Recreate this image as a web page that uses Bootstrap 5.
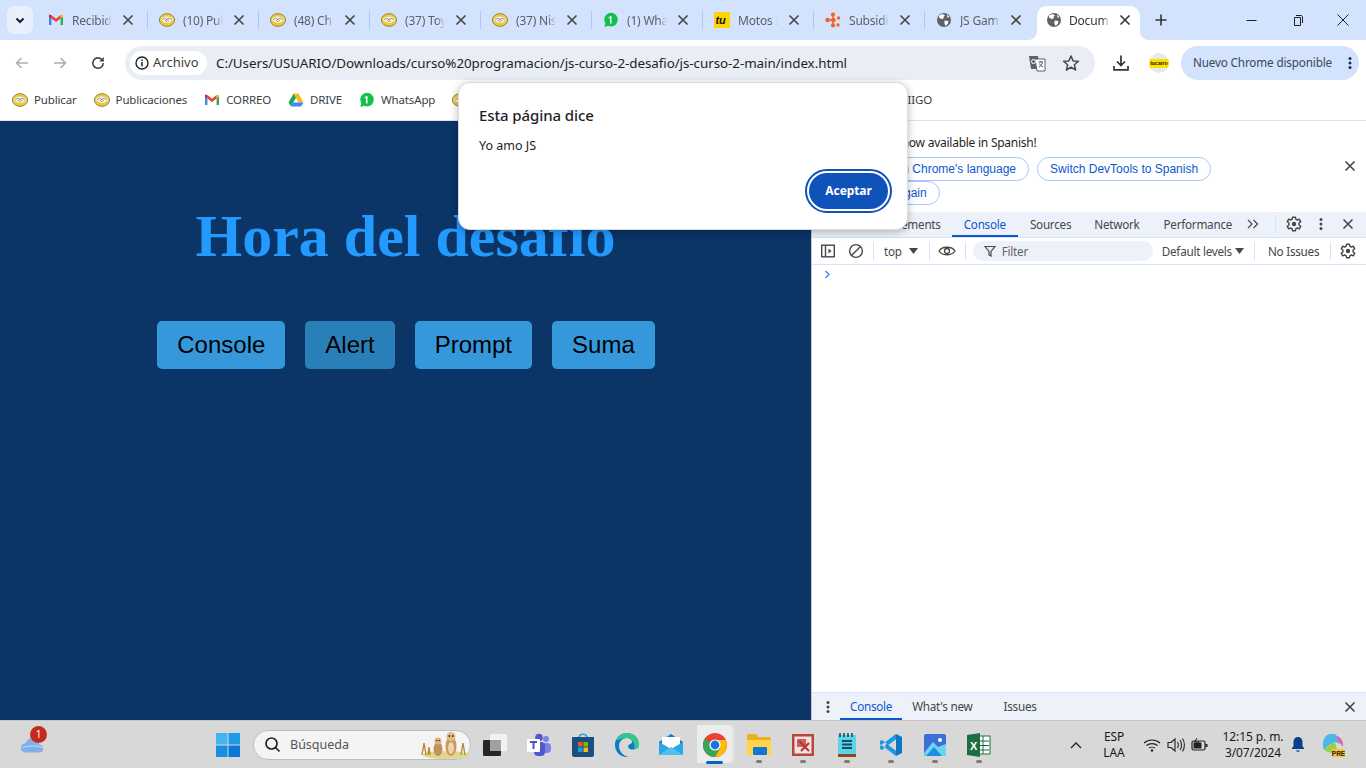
<!DOCTYPE html>
<html lang="es">
<head>
  <meta charset="UTF-8">
  <title>Documento</title>
  <link href="https://cdn.jsdelivr.net/npm/bootstrap@5.3.3/dist/css/bootstrap.min.css" rel="stylesheet">
  <style>
    html, body { height: 100%; overflow: hidden; }
    body { font-family: "Noto Sans", "Open Sans", sans-serif; font-size: 12px; color: #474747; background: #fff; }
    .screen { width: 1366px; height: 768px; position: relative; }
    svg { display: block; flex: none; }

    /* tabs */
    .tabstrip { height: 40px; background: #d3e3fd; padding-left: 7px; }
    .tabmenu { width: 26px; height: 28px; margin-top: 6px; margin-right: 4px; background: #e9f0fd; border-radius: 8px; }
    .chrometab { width: 111px; height: 40px; padding-left: 11px; padding-right: 12px; gap: 8px; font-size: 12px; letter-spacing: -.2px; color: #5b5f66; position: relative; }
    .chrometab::after { content: ""; position: absolute; right: 0; top: 11px; height: 18px; width: 1px; background: #a8c7fa; }
    .chrometab.nosep::after { display: none; }
    .tabname { flex: 1; padding-top: 1px; overflow: hidden; white-space: nowrap; -webkit-mask-image: linear-gradient(90deg, #000 80%, transparent 100%); mask-image: linear-gradient(90deg, #000 80%, transparent 100%); }
    .tabactive { width: 103px; height: 34px; margin-top: 6px; margin-left: 1px; background: #fff; border-radius: 10px 10px 0 0; padding: 0 7px 6px 9px; gap: 7px; font-size: 12px; letter-spacing: -.2px; color: #333; position: relative; }
    .tabactive::before, .tabactive::after { content: ""; position: absolute; bottom: 0; width: 8px; height: 8px; }
    .tabactive::before { left: -8px; background: radial-gradient(circle at 0 0, #d3e3fd 7.5px, #fff 8px); }
    .tabactive::after { right: -8px; background: radial-gradient(circle at 100% 0, #d3e3fd 7.5px, #fff 8px); }
    .winbtn { width: 46px; height: 40px; }

    /* toolbar */
    .toolrow { height: 40px; padding: 6px 7px 0 0; }
    .navbtn { width: 38px; height: 34px; }
    .omnibox { width: 970px; height: 34px; margin-left: 8px; background: #e9eef6; border-radius: 17px; padding: 0 15px 0 5px; }
    .chip { width: 77px; height: 24px; background: #fff; border-radius: 12px; padding-left: 5px; gap: 4px; font-size: 13px; color: #3c4043; }
    .urltext { margin-left: 9px; font-size: 13.4px; letter-spacing: -.06px; color: #1f1f1f; flex: 1; white-space: nowrap; }
    .updatepill { width: 178px; height: 34px; background: #d3e3fd; border-radius: 17px; padding-left: 12px; font-size: 11.7px; letter-spacing: -.15px; color: #3c4656; margin-left: 12px; white-space: nowrap; }
    .avatar { width: 20px; height: 20px; border-radius: 50%; background: #e6e9f2; overflow: hidden; }

    /* bookmarks */
    .bookbar { height: 41px; padding: 0 0 1px 12px; border-bottom: 1px solid #dfe1e5; font-size: 11.5px; letter-spacing: -.15px; color: #3c4043; }
    .bookitem { gap: 6px; margin-right: 17px; white-space: nowrap; }

    /* page */
    .workarea { height: 599px; }
    .jspage { width: 811px; background: #0b3467; text-align: center; }
    .jstitle { font-family: "Liberation Serif", serif; font-weight: 700; font-size: 60px; line-height: 69px; color: #229aff; margin: 81px 0 0 0; }
    .btnrow { gap: 20px; margin-top: 50px; margin-left: 1px; }
    .jsbtn { height: 48px; padding: 0 20px; background: #3498db; border: 0; border-radius: 5px; font-family: "Liberation Sans", sans-serif; font-size: 24px; color: #000; }
    .jsbtn.hovered { background: #2980b9; }

    /* devtools */
    .devtools { width: 555px; background: #fff; border-left: 1px solid #c4c7cc; font-size: 11.7px; letter-spacing: -.25px; }
    .infobar { height: 91px; position: relative; padding: 13px 0 0 27px; font-size: 12px; line-height: 18px; color: #1f1f1f; }
    .pillbtn { height: 24px; border: 1px solid #a8c7fa; border-radius: 12px; background: #fff; font-family: "Liberation Sans", sans-serif; font-size: 12px; letter-spacing: 0; color: #0b57d0; padding: 0 12px; white-space: nowrap; }
    .pillrow { margin: 5px 0 0 -17px; width: 500px; column-gap: 8px; }
    .devtabs { height: 26px; background: #edf2fa; color: #474747; border-bottom: 1px solid #d3e3fd; position: relative; }
    .devtab { height: 25px; line-height: 25px; white-space: nowrap; position: relative; }
    .devtab.on { color: #0b57d0; }
    .devtab.on::after { content: ""; position: absolute; left: 0; right: 0; bottom: 0; height: 2px; background: #0b57d0; }
    .vsep { width: 1px; height: 18px; background: #d3e3fd; flex: none; }
    .consolebar { height: 27px; border-bottom: 1px solid #d3e3fd; color: #474747; }
    .consolebar span { padding-top: 1px; }
    .filterbox { width: 180px; height: 20px; border-radius: 10px; background: #edf2fa; padding-left: 10px; gap: 6px; color: #5f6368; }
    .drawerbar { height: 28px; background: #edf2fa; border-top: 1px solid #d3e3fd; color: #474747; }
    .drawerbar .devtab { height: 27px; line-height: 27px; }

    /* dialog */
    .jsdialog { position: absolute; left: 458px; top: 82px; width: 450px; height: 148px; background: #fff; border-radius: 12px; border: 1px solid #dadce0; box-shadow: 0 2px 8px rgba(0,0,0,.28); padding: 20px 20px 0 20px; color: #1f1f1f; }
    .dialogtitle { font-size: 15px; font-weight: 500; line-height: 24px; letter-spacing: -.1px; }
    .dialogtext { font-size: 12.5px; line-height: 18px; margin-top: 10px; }
    .acceptbtn { position: absolute; right: 19px; bottom: 20px; width: 79px; height: 36px; border-radius: 18px; border: 0; background: #0f52ba; color: #fff; font-size: 12px; font-weight: 700; outline: 2px solid #0f52ba; outline-offset: 2px; letter-spacing: -.1px; }

    /* taskbar */
    .taskbar { height: 48px; background: #d8d8d8; border-top: 1px solid #c2c4c6; position: relative; color: #1a1a1a; }
    .taskleft { width: 206px; padding-left: 20px; position: relative; }
    .notifdot { position: absolute; left: 30px; top: -10px; width: 17px; height: 17px; border-radius: 50%; background: #c42b1c; color: #fff; font-size: 10px; line-height: 17px; text-align: center; }
    .appslot { width: 44px; height: 47px; position: relative; flex: none; }
    .appslot.running::after { content: ""; position: absolute; left: 19px; bottom: 5px; width: 6px; height: 3px; border-radius: 2px; background: #7c7c7c; }
    .appslot.current { background: linear-gradient(#ececec, #ececec) 4px 4px / 35px 38px no-repeat; }
    .appslot.current::before { content: ""; position: absolute; left: 39px; top: 6px; width: 2px; height: 34px; background: #e4e4e4; }
    .appslot.current::after { content: ""; position: absolute; left: 13px; bottom: 4px; width: 17px; height: 3px; border-radius: 2px; background: #0067c0; }
    .searchpill { width: 218px; height: 30px; margin: 0 2px 0 3px; background: #f4f4f4; border: 1px solid #bdbdbd; border-radius: 15px; padding-left: 10px; gap: 9px; font-size: 12.5px; color: #555; flex: none; }
    .searchpill span { padding-top: 1px; }
    .tray { font-size: 12px; line-height: 16px; letter-spacing: -.1px; text-align: center; color: #1a1a1a; }
  </style>
</head>
<body>
<svg width="0" height="0" style="position:absolute">
  <defs>
    <symbol id="ico-ml" viewBox="0 0 16 16"><ellipse cx="8" cy="8" rx="7.6" ry="6.4" fill="#f0c92e" stroke="#7d7242" stroke-width=".8"/><path d="M1.400 7.500C4 3.600 12 3.600 14.600 7.500 12.500 9.500 11 10.800 8.500 11 5.500 10.800 3.400 9.500 1.400 7.500Z" fill="#f4f2e6"/><path d="M3 7.600L5.600 6.400 7.600 7.400 10.200 6.200 13 7.600M6 8.200L8.200 10.200M7.600 7.400L10 9.400" stroke="#7d7a68" stroke-width=".8" fill="none"/></symbol>
    <symbol id="ico-gmail" viewBox="0 0 16 16"><path d="M1 13V4.200L3.400 3.200V13Z" fill="#4285f4"/><path d="M12.600 13V3.200L15 4.200V13Z" fill="#34a853"/><path d="M3.400 3L8 6.700 12.600 3 12.600 6.600 8 10 3.400 6.600Z" fill="#ea4335"/><path d="M12.600 3.200L15 2.600V4.800L12.600 6.600Z" fill="#fbbc04"/><path d="M1 2.600L3.400 3.200V6.600L1 4.800Z" fill="#c5221f"/></symbol>
    <symbol id="ico-wa" viewBox="0 0 16 16"><circle cx="8" cy="7.600" r="6.800" fill="#12c14c"/><path d="M2.200 11L1.400 15 5.400 13.800Z" fill="#12c14c"/><path d="M8.500 4V11.500H7V6L5.800 6.600V5.200L7.500 4Z" fill="#fff"/></symbol>
    <symbol id="ico-drive" viewBox="0 0 16 16"><path d="M5.600 1.500H10.400L15.500 10.500H10.600Z" fill="#fbbc04"/><path d="M5.600 1.500L.5 10.500 3 14.500 8 5.800Z" fill="#1fa463"/><path d="M5.400 10.500H15.500L13 14.500H3Z" fill="#4285f4"/></symbol>
    <symbol id="ico-globe" viewBox="0 0 16 16"><circle cx="8" cy="8" r="7" fill="#5f6368"/><path d="M3 3.400L6.500 2 9 3.400 7.400 5 7.800 6.600 5.600 7 3 5.600ZM8.600 8.400L12.400 9 12 11.600 9.600 14 8.400 11.400ZM11 2.600L13.600 5.200 11.400 5.600Z" fill="#fff"/></symbol>
    <symbol id="ico-tu" viewBox="0 0 16 16"><rect width="16" height="16" fill="#ffd400"/><text x="1.500" y="12" font-family="Liberation Sans" font-weight="700" font-style="italic" font-size="11" fill="#111">tu</text></symbol>
    <symbol id="ico-sub" viewBox="0 0 16 16"><g fill="#f26522"><circle cx="8" cy="2.600" r="2.100"/><circle cx="8.400" cy="8" r="2.300"/><circle cx="2.600" cy="8" r="2.200"/><circle cx="13.600" cy="6" r="1.700"/><circle cx="8" cy="13.400" r="2.100"/><circle cx="13" cy="13" r="1.700"/><rect x="2.600" y="7.200" width="6" height="1.600"/><rect x="7.200" y="2.600" width="1.600" height="10.600"/></g></symbol>
    <symbol id="ico-x" viewBox="0 0 16 16"><path d="M3.500 3.500L12.500 12.500M12.500 3.500L3.500 12.500" stroke="currentColor" stroke-width="1.600" fill="none"/></symbol>
    <symbol id="ico-gear" viewBox="0 0 16 16"><path d="M6.600 1.200H9.400L9.800 3.200 11.400 4 13.300 3.200 14.700 5.600 13.100 7V9L14.700 10.400 13.300 12.800 11.400 12 9.800 12.800 9.400 14.800H6.600L6.200 12.800 4.600 12 2.700 12.800 1.300 10.400 2.900 9V7L1.300 5.600 2.700 3.200 4.600 4 6.200 3.200Z" fill="none" stroke="currentColor" stroke-width="1.400" stroke-linejoin="round"/><circle cx="8" cy="8" r="2.200" fill="currentColor"/></symbol>
    <symbol id="ico-dots" viewBox="0 0 16 16"><g fill="currentColor"><circle cx="8" cy="3.400" r="1.500"/><circle cx="8" cy="8" r="1.500"/><circle cx="8" cy="12.600" r="1.500"/></g></symbol>
    <symbol id="ico-chrome" viewBox="0 0 24 24"><circle cx="12" cy="12" r="12" fill="#ea4335"/><path d="M12 12L1.600 6A12 12 0 0 0 12 24L17.200 15Z" fill="#34a853"/><path d="M12 7H22.900A12 12 0 0 1 12 24L17.200 15Z" fill="#fbbc04"/><circle cx="12" cy="12" r="5.600" fill="#fff"/><circle cx="12" cy="12" r="4.400" fill="#1a73e8"/></symbol>
  </defs>
</svg>

<div class="screen">
  <!-- pestañas -->
  <div class="tabstrip d-flex align-items-start">
    <div class="tabmenu d-flex align-items-center justify-content-center">
      <svg width="10" height="7" viewBox="0 0 10 7"><path d="M1.500 1.500L5 5 8.500 1.500" stroke="#1f1f1f" stroke-width="2" fill="none"/></svg>
    </div>
    <div class="chrometab d-flex align-items-center"><svg width="16" height="16"><use href="#ico-gmail"/></svg><span class="tabname">Recibid</span><svg width="16" height="16" color="#444"><use href="#ico-x"/></svg></div>
    <div class="chrometab d-flex align-items-center"><svg width="16" height="16"><use href="#ico-ml"/></svg><span class="tabname">(10) Pul</span><svg width="16" height="16" color="#444"><use href="#ico-x"/></svg></div>
    <div class="chrometab d-flex align-items-center"><svg width="16" height="16"><use href="#ico-ml"/></svg><span class="tabname">(48) Ch</span><svg width="16" height="16" color="#444"><use href="#ico-x"/></svg></div>
    <div class="chrometab d-flex align-items-center"><svg width="16" height="16"><use href="#ico-ml"/></svg><span class="tabname">(37) Toy</span><svg width="16" height="16" color="#444"><use href="#ico-x"/></svg></div>
    <div class="chrometab d-flex align-items-center"><svg width="16" height="16"><use href="#ico-ml"/></svg><span class="tabname">(37) Nis</span><svg width="16" height="16" color="#444"><use href="#ico-x"/></svg></div>
    <div class="chrometab d-flex align-items-center"><svg width="16" height="16"><use href="#ico-wa"/></svg><span class="tabname">(1) Wha</span><svg width="16" height="16" color="#444"><use href="#ico-x"/></svg></div>
    <div class="chrometab d-flex align-items-center"><svg width="16" height="16"><use href="#ico-tu"/></svg><span class="tabname">Motos I</span><svg width="16" height="16" color="#444"><use href="#ico-x"/></svg></div>
    <div class="chrometab d-flex align-items-center"><svg width="16" height="16"><use href="#ico-sub"/></svg><span class="tabname">Subsidi</span><svg width="16" height="16" color="#444"><use href="#ico-x"/></svg></div>
    <div class="chrometab nosep d-flex align-items-center"><svg width="16" height="16"><use href="#ico-globe"/></svg><span class="tabname">JS Gam</span><svg width="16" height="16" color="#444"><use href="#ico-x"/></svg></div>
    <div class="tabactive d-flex align-items-center"><svg width="16" height="16"><use href="#ico-globe"/></svg><span class="tabname">Docum</span><svg width="16" height="16" color="#333"><use href="#ico-x"/></svg></div>
    <div class="d-flex align-items-center justify-content-center" style="width:34px;height:40px;margin-left:4px">
      <svg width="14" height="14" viewBox="0 0 14 14"><path d="M7 1.500V12.500M1.500 7H12.500" stroke="#333" stroke-width="1.600"/></svg>
    </div>
    <div class="ms-auto d-flex">
      <div class="winbtn d-flex align-items-center justify-content-center"><svg width="11" height="11" viewBox="0 0 11 11"><path d="M.5 5.500H10.500" stroke="#222"/></svg></div>
      <div class="winbtn d-flex align-items-center justify-content-center"><svg width="11" height="11" viewBox="0 0 11 11"><path d="M2.500 2.500H8.500V10.500H2.500ZM4 .5H9C9.800 .5 10.500 1.200 10.500 2V8" stroke="#222" fill="none"/></svg></div>
      <div class="winbtn d-flex align-items-center justify-content-center"><svg width="12" height="12" viewBox="0 0 12 12"><path d="M.5 .5L11.500 11.500M11.500 .5L.5 11.500" stroke="#222"/></svg></div>
    </div>
  </div>

  <!-- barra de direcciones -->
  <div class="toolrow d-flex align-items-start">
    <div class="d-flex" style="margin-left:3px">
      <div class="navbtn d-flex align-items-center justify-content-center"><svg width="16" height="16" viewBox="0 0 16 16"><path d="M14 8H2.500M7.500 3L2.500 8 7.500 13" stroke="#a9adb3" stroke-width="1.500" fill="none"/></svg></div>
      <div class="navbtn d-flex align-items-center justify-content-center"><svg width="16" height="16" viewBox="0 0 16 16"><path d="M2 8H13.500M8.500 3L13.500 8 8.500 13" stroke="#a9adb3" stroke-width="1.500" fill="none"/></svg></div>
      <div class="navbtn d-flex align-items-center justify-content-center"><svg width="16" height="16" viewBox="0 0 16 16"><path d="M13.200 8A5.200 5.200 0 1 1 11.600 4.300L13.400 6" stroke="#474747" stroke-width="1.600" fill="none"/><path d="M13.800 2V6.600H9.200" fill="#474747"/></svg></div>
    </div>
    <div class="omnibox d-flex align-items-center">
      <div class="chip d-flex align-items-center">
        <svg width="14" height="14" viewBox="0 0 14 14"><circle cx="7" cy="7" r="6" fill="none" stroke="#222" stroke-width="1.400"/><path d="M7 6V10.400M7 3.400V5" stroke="#222" stroke-width="1.500"/></svg>
        <span>Archivo</span>
      </div>
      <span class="urltext">C:/Users/USUARIO/Downloads/curso%20programacion/js-curso-2-desafio/js-curso-2-main/index.html</span>
      <svg class="me-3" width="18" height="18" viewBox="0 0 18 18"><path d="M1 2H10L12 15H3Z" fill="#5f6368"/><path d="M7 5H17V17H9Z" fill="#fff" stroke="#5f6368"/><path d="M10.500 8H15M12.700 7V8M11 13C13 12 14 10.500 14.400 8M11.500 9.500C12 11 13.500 12.500 15 13" stroke="#474747" stroke-width=".9" fill="none"/><circle cx="5.500" cy="7.500" r="2" fill="none" stroke="#fff"/></svg>
      <svg width="18" height="18" viewBox="0 0 18 18"><path d="M9 2L11.100 6.900 16.400 7.300 12.400 10.800 13.600 16 9 13.200 4.400 16 5.600 10.800 1.600 7.300 6.900 6.900Z" fill="none" stroke="#474747" stroke-width="1.500" stroke-linejoin="round"/></svg>
    </div>
    <div class="d-flex align-items-center justify-content-center" style="width:34px;height:34px;margin-left:9px"><svg width="18" height="18" viewBox="0 0 18 18"><path d="M9 1.500V11M5 7.500L9 11.500 13 7.500M2 12V15.800H16V12" stroke="#333" stroke-width="1.700" fill="none"/></svg></div>
    <div class="d-flex align-items-center justify-content-center" style="width:20px;height:34px;margin-left:11px"><div class="avatar d-flex align-items-center justify-content-center"><svg width="20" height="9" viewBox="0 0 20 9"><rect width="20" height="9" fill="#ffe000"/><text x="10" y="5.500" text-anchor="middle" font-size="5" font-weight="700" font-family="Liberation Sans" fill="#111">tucarro</text></svg></div></div>
    <div class="updatepill d-flex align-items-center">
      <span>Nuevo Chrome disponible</span>
      <svg class="ms-auto" style="margin-right:1px" width="16" height="16" color="#1d2b4b"><use href="#ico-dots"/></svg>
    </div>
  </div>

  <!-- marcadores -->
  <div class="bookbar d-flex align-items-center">
    <div class="bookitem d-flex align-items-center"><svg width="16" height="16"><use href="#ico-ml"/></svg>Publicar</div>
    <div class="bookitem d-flex align-items-center"><svg width="16" height="16"><use href="#ico-ml"/></svg>Publicaciones</div>
    <div class="bookitem d-flex align-items-center"><svg width="16" height="16"><use href="#ico-gmail"/></svg>CORREO</div>
    <div class="bookitem d-flex align-items-center"><svg width="16" height="16"><use href="#ico-drive"/></svg>DRIVE</div>
    <div class="bookitem d-flex align-items-center"><svg width="16" height="16"><use href="#ico-wa"/></svg>WhatsApp</div>
    <div class="bookitem d-flex align-items-center"><svg width="16" height="16"><use href="#ico-ml"/></svg></div>
    <div class="ms-auto" style="margin-right:434px">IIGO</div>
  </div>

  <!-- pagina + devtools -->
  <div class="workarea d-flex">
    <div class="jspage">
      <h1 class="jstitle">Hora del desafio</h1>
      <div class="btnrow d-flex justify-content-center">
        <button class="jsbtn">Console</button>
        <button class="jsbtn hovered">Alert</button>
        <button class="jsbtn">Prompt</button>
        <button class="jsbtn">Suma</button>
      </div>
    </div>
    <div class="devtools d-flex flex-column">
      <div class="infobar">
        <div>DevTools is now available in Spanish!</div>
        <div class="pillrow d-flex flex-wrap">
          <button class="pillbtn">Always match Chrome's language</button>
          <button class="pillbtn">Switch DevTools to Spanish</button>
          <button class="pillbtn">Don't show again</button>
        </div>
        <svg class="position-absolute" style="right:8px;top:37px" width="16" height="16" color="#444"><use href="#ico-x"/></svg>
      </div>
      <div class="devtabs d-flex">
        <div class="devtab" style="margin-left:80px">Elements</div>
        <div class="devtab on" style="margin-left:11px;padding:0 12px">Console</div>
        <div class="devtab" style="margin-left:12px">Sources</div>
        <div class="devtab" style="margin-left:23px">Network</div>
        <div class="devtab" style="margin-left:24px">Performance</div>
        <svg style="margin:5px 0 0 14px" width="14" height="14" viewBox="0 0 14 14"><path d="M2 3L6 7 2 11M7.500 3L11.500 7 7.500 11" stroke="#474747" stroke-width="1.200" fill="none"/></svg>
        <div class="vsep" style="margin:3px 0 0 15px"></div>
        <svg style="margin:4px 0 0 10px" width="16" height="16" color="#474747"><use href="#ico-gear"/></svg>
        <svg style="margin:4px 0 0 11px" width="16" height="16" color="#474747"><use href="#ico-dots"/></svg>
        <svg style="margin:4px 0 0 11px" width="16" height="16" color="#474747"><use href="#ico-x"/></svg>
      </div>
      <div class="consolebar d-flex align-items-center">
        <svg style="margin-left:8px" width="16" height="16" viewBox="0 0 16 16"><rect x="1.700" y="2.200" width="12.600" height="11.600" fill="none" stroke="#474747" stroke-width="1.400"/><path d="M5.500 2V14" stroke="#474747" stroke-width="1.400"/><path d="M8.500 5.500L11.500 8 8.500 10.500Z" fill="#474747"/></svg>
        <svg style="margin-left:12px" width="16" height="16" viewBox="0 0 16 16"><circle cx="8" cy="8" r="6.400" fill="none" stroke="#474747" stroke-width="1.400"/><path d="M3.500 12.500L12.500 3.500" stroke="#474747" stroke-width="1.400"/></svg>
        <div class="vsep" style="margin-left:9px"></div>
        <span style="margin-left:10px">top</span>
        <svg style="margin-left:7px" width="9" height="6" viewBox="0 0 9 6"><path d="M0 0H9L4.500 6Z" fill="#474747"/></svg>
        <div class="vsep" style="margin-left:11px"></div>
        <svg style="margin-left:8px" width="18" height="14" viewBox="0 0 18 14"><path d="M1 7C4 2 14 2 17 7 14 12 4 12 1 7Z" fill="none" stroke="#474747" stroke-width="1.300"/><circle cx="9" cy="7" r="2.500" fill="none" stroke="#474747" stroke-width="1.300"/></svg>
        <div class="vsep" style="margin-left:9px"></div>
        <div class="filterbox d-flex align-items-center" style="margin-left:7px">
          <svg width="12" height="12" viewBox="0 0 12 12" style="margin-left:1px"><path d="M1 1.500H11L7 6.500V11L5 10V6.500Z" fill="none" stroke="#474747" stroke-width="1.200"/></svg>
          <span>Filter</span>
        </div>
        <span style="margin-left:9px">Default levels</span>
        <svg style="margin-left:3px" width="9" height="6" viewBox="0 0 9 6"><path d="M0 0H9L4.500 6Z" fill="#474747"/></svg>
        <div class="vsep" style="margin-left:10px"></div>
        <span style="margin-left:13px">No Issues</span>
        <div class="vsep" style="margin-left:11px"></div>
        <svg style="margin-left:9px" width="16" height="16" color="#474747"><use href="#ico-gear"/></svg>
      </div>
      <div class="flex-grow-1">
        <svg style="margin:5px 0 0 12px" width="7" height="9" viewBox="0 0 7 9"><path d="M1.500 1L5 4.500 1.500 8" stroke="#3b82f6" stroke-width="1.300" fill="none"/></svg>
      </div>
      <div class="drawerbar d-flex">
        <svg style="margin:6px 0 0 8px" width="16" height="16" color="#474747"><use href="#ico-dots"/></svg>
        <div class="devtab on" style="margin-left:4px;padding:0 10px">Console</div>
        <div class="devtab" style="margin-left:10px">What's new</div>
        <div class="devtab" style="margin-left:31px">Issues</div>
        <svg class="ms-auto" style="margin:6px 8px 0 0" width="16" height="16" color="#444"><use href="#ico-x"/></svg>
      </div>
    </div>
  </div>

  <!-- barra de tareas -->
  <div class="taskbar d-flex align-items-center">
    <div class="taskleft">
      <svg width="24" height="17" viewBox="0 0 26 19"><path d="M6 18.500C2.500 18.500 .5 16 .5 13.500 .5 10.500 3 8.500 5.500 8.500 7 4.500 10 2.500 13.500 2.500 18 2.500 21 6 21 9.500 24 10 25.500 12 25.500 14.500 25.500 17 23.500 18.500 21 18.500Z" fill="#7fb0ea"/><path d="M2 13C8 10.500 19 10.500 25 13" stroke="#cfe2fa" fill="none"/></svg>
      <div class="notifdot">1</div>
    </div>
    <div class="appslot d-flex align-items-center justify-content-center">
      <svg width="24" height="24" viewBox="0 0 24 24"><rect width="11.500" height="11.500" fill="#42b4f0"/><rect x="12.500" width="11.500" height="11.500" fill="#1e9be6"/><rect y="12.500" width="11.500" height="11.500" fill="#1a8fe0"/><rect x="12.500" y="12.500" width="11.500" height="11.500" fill="#0a78d4"/></svg>
    </div>
    <div class="searchpill d-flex align-items-center">
      <svg width="17" height="17" viewBox="0 0 17 17"><circle cx="7.500" cy="7.500" r="5.500" fill="none" stroke="#222" stroke-width="1.700"/><path d="M11.500 11.500L15.500 15.500" stroke="#222" stroke-width="1.700"/></svg>
      <span>Búsqueda</span>
      <svg class="ms-auto" width="52" height="28" viewBox="0 0 52 28"><ellipse cx="28" cy="24" rx="23" ry="4" fill="#dcd890"/><path d="M4 24L6 12 8 24M47 24L45 12 43 24M10 24L11 16 12 24" stroke="#b8862f" stroke-width="1.300" fill="none"/><ellipse cx="20" cy="18" rx="4.500" ry="7" fill="#c2925a"/><circle cx="20" cy="10" r="3.500" fill="#dcb67c"/><circle cx="18.800" cy="9.500" r=".7" fill="#333"/><circle cx="21.200" cy="9.500" r=".7" fill="#333"/><ellipse cx="33" cy="15" rx="5.500" ry="10" fill="#c99a58"/><ellipse cx="33" cy="17" rx="3" ry="6" fill="#eed6a8"/><circle cx="33" cy="5.500" r="4.500" fill="#e0bb82"/><circle cx="31.300" cy="5" r=".9" fill="#333"/><circle cx="34.700" cy="5" r=".9" fill="#333"/></svg>
    </div>
    <div class="appslot d-flex align-items-center justify-content-center"><svg width="24" height="24" viewBox="0 0 24 24"><rect x="7" y="1" width="17" height="17" rx="1" fill="#f2f2f2"/><rect x="0" y="7" width="18" height="16" rx="1" fill="#262626"/><rect x="7" y="7" width="11" height="11" fill="#a0a0a0"/></svg></div>
    <div class="appslot d-flex align-items-center justify-content-center"><svg width="26" height="24" viewBox="0 0 26 24"><circle cx="20" cy="6" r="3" fill="#7b83eb"/><rect x="14" y="10" width="11" height="10" rx="4" fill="#7b83eb"/><circle cx="13" cy="4.500" r="3.800" fill="#5059c9"/><rect x="8" y="9" width="11" height="14" rx="4" fill="#5059c9"/><rect x="1" y="6" width="13" height="13" rx="1" fill="#fff"/><path d="M4 9H11M7.500 9V16" stroke="#4b53bc" stroke-width="2"/></svg></div>
    <div class="appslot d-flex align-items-center justify-content-center"><svg width="24" height="26" viewBox="0 0 24 26"><path d="M8 6C8 1 16 1 16 6" fill="none" stroke="#23a7c9" stroke-width="1.600"/><path d="M1 5H23V23C23 24 22 25 21 25H3C2 25 1 24 1 23Z" fill="#1a4f80"/><rect x="7" y="10" width="4.500" height="4.500" fill="#f25022"/><rect x="12.500" y="10" width="4.500" height="4.500" fill="#7fba00"/><rect x="7" y="15.500" width="4.500" height="4.500" fill="#00a4ef"/><rect x="12.500" y="15.500" width="4.500" height="4.500" fill="#ffb900"/></svg></div>
    <div class="appslot d-flex align-items-center justify-content-center"><svg width="26" height="26" viewBox="0 0 26 26"><path d="M13 1C20 1 25 6 25 13 25 15.500 22 17.500 18.500 17.500 15 17.500 13.500 15.500 14.500 13.500 15 12 18 12 18 10 18 7 15 6 13 6 8 6 5 10 5 14 5 19 9 24 15 25 14.500 25 13.500 25 13 25 6 25 1 19.500 1 13 1 6 6 1 13 1Z" fill="#0c7cc7"/><path d="M2 8C5 2.500 10 1 13 1 20 1 25 6 25 13 25 15 23.500 17 20 17.500 22 12 18 6 13 6 8 6 4 8.500 2 8Z" fill="#35c78a"/><path d="M25 14C25 21 20 25 15 25 18 25 22 23 24 19Z" fill="#2fb5e0"/></svg></div>
    <div class="appslot d-flex align-items-center justify-content-center"><svg width="24" height="22" viewBox="0 0 24 22"><path d="M0 8L12 0 24 8V21H0Z" fill="#0f78d4"/><path d="M3 3H21V12L12 17 3 12Z" fill="#fff"/><path d="M0 8L12 15 24 8V21H0Z" fill="#28a8ea"/><path d="M0 21L12 13 24 21Z" fill="#50c0f0"/></svg></div>
    <div class="appslot current d-flex align-items-center justify-content-center"><svg width="24" height="24"><use href="#ico-chrome"/></svg></div>
    <div class="appslot running d-flex align-items-center justify-content-center"><svg width="24" height="22" viewBox="0 0 24 22"><path d="M0 2C0 1 1 0 2 0H9L11 3H22C23 3 24 4 24 5V21H0Z" fill="#e8b321"/><rect x="0" y="6" width="24" height="15" fill="#ffd34d"/><rect x="6" y="13" width="14" height="8" rx="1" fill="#0f78d4"/></svg></div>
    <div class="appslot running d-flex align-items-center justify-content-center"><svg width="22" height="22" viewBox="0 0 22 22"><rect width="22" height="22" fill="#b6473f"/><rect x="2.500" y="2.500" width="17" height="17" fill="#f0e2de"/><rect x="5" y="5" width="9" height="8" fill="#c9645c"/><path d="M7 7L17 17M17 9L9 17" stroke="#b9332a" stroke-width="2"/></svg></div>
    <div class="appslot running d-flex align-items-center justify-content-center"><svg width="18" height="24" viewBox="0 0 18 24"><rect y="2" width="18" height="19" fill="#5dd3e8"/><path d="M2 0V4M6 0V4M10 0V4M14 0V4" stroke="#15414f" stroke-width="1.500"/><path d="M4 8H14M4 11.500H14M4 15H14" stroke="#134e63" stroke-width="1.800"/><rect y="21" width="18" height="3" fill="#8b4a1c"/></svg></div>
    <div class="appslot running d-flex align-items-center justify-content-center"><svg width="24" height="24" viewBox="0 0 24 24"><path d="M17 1L23 4V20L17 23 6 13Z" fill="#0e78c4"/><path d="M17 6V18L8.500 12Z" fill="#d8d8d8"/><path d="M1 8L3 7 17 18V23L1 11V8ZM1 16L3 17 17 6V1L1 13Z" fill="#1c98e8"/></svg></div>
    <div class="appslot running d-flex align-items-center justify-content-center"><svg width="22" height="22" viewBox="0 0 22 22"><rect width="22" height="22" rx="2" fill="#3a6fd8"/><circle cx="16" cy="6" r="2" fill="#fff"/><path d="M0 19L9 8 14 13 22 10V20C22 21 21 22 20 22H2C1 22 0 21 0 20Z" fill="#6fd3f2"/><path d="M2 22L10 13 18 22Z" fill="#1b8fe0"/></svg></div>
    <div class="appslot running d-flex align-items-center justify-content-center"><svg width="24" height="24" viewBox="0 0 24 24"><rect x="9" y="3" width="14" height="18" fill="#fff" stroke="#1d6f42"/><path d="M12 8H22M12 12.500H22M12 17H22M16 3V21" stroke="#1d6f42"/><path d="M0 2L13 0V24L0 22Z" fill="#1d6f42"/><text x="3" y="17" font-family="Liberation Sans" font-weight="700" font-size="11" fill="#fff">X</text></svg></div>
    <div class="ms-auto d-flex align-items-center">
      <svg width="12" height="8" viewBox="0 0 12 8"><path d="M1 7L6 2 11 7" stroke="#222" stroke-width="1.300" fill="none"/></svg>
      <div class="tray" style="margin-left:14px;width:36px">ESP<br>LAA</div>
      <svg style="margin-left:11px" width="18" height="14" viewBox="0 0 18 14"><path d="M1 5C5.500 1 12.500 1 17 5M3.500 7.500C6.500 5 11.500 5 14.500 7.500M6 10C7.500 9 10.500 9 12 10" stroke="#222" stroke-width="1.200" fill="none"/><circle cx="9" cy="12.500" r="1.200" fill="#222"/></svg>
      <svg style="margin-left:6px" width="18" height="16" viewBox="0 0 18 16"><path d="M1 5.500H4L8 2V14L4 10.500H1Z" fill="none" stroke="#222" stroke-width="1.100"/><path d="M10.500 5C11.500 6.500 11.500 9.500 10.500 11M13 3C15 5.500 15 10.500 13 13M15.500 1.500C18 5 18 11 15.500 14.500" stroke="#222" stroke-width="1.100" fill="none"/></svg>
      <svg style="margin-left:6px" width="18" height="14" viewBox="0 0 18 14"><rect x="1" y="3" width="13" height="9" rx="1.500" fill="none" stroke="#222" stroke-width="1.200"/><rect x="2.500" y="4.500" width="8" height="6" fill="#222"/><rect x="14.500" y="6" width="2" height="3" fill="#222"/><path d="M6 0L3.500 4H8L6 7" stroke="#222" fill="none"/></svg>
      <div class="tray" style="margin-left:9px;width:70px">12:15 p. m.<br>3/07/2024</div>
      <svg style="margin-left:2px" width="16" height="17" viewBox="0 0 16 17"><path d="M8 1C5 1 3.500 3.500 3.500 6V10L1.500 13H14.500L12.500 10V6C12.500 3.500 11 1 8 1Z" fill="#0b3f8a"/><path d="M6 14.500C6.500 16.200 9.500 16.200 10 14.500Z" fill="#0b3f8a"/></svg>
      <svg style="margin:0 21px 0 15px" width="24" height="24" viewBox="0 0 24 24"><path d="M5 3C8 0 14 0 16 3L20 11 14 9 8 12 3 17C1 12 2 6 5 3Z" fill="#4db5e8"/><path d="M16 3C20 4 23 9 22 14L20 11 17 8Z" fill="#e85fb0"/><path d="M3 17C8 20 13 21 16 17L14 9 8 12Z" fill="#9ad048"/><rect x="11" y="16" width="13" height="8" rx="1" fill="#f7c52c"/><text x="17.500" y="22.500" text-anchor="middle" font-family="Liberation Sans" font-weight="700" font-size="6.500" fill="#222">PRE</text></svg>
    </div>
  </div>

  <!-- alert del navegador -->
  <div class="jsdialog">
    <div class="dialogtitle">Esta página dice</div>
    <div class="dialogtext">Yo amo JS</div>
    <button class="acceptbtn">Aceptar</button>
  </div>
</div>

<script src="https://cdn.jsdelivr.net/npm/bootstrap@5.3.3/dist/js/bootstrap.bundle.min.js"></script>
</body>
</html>
